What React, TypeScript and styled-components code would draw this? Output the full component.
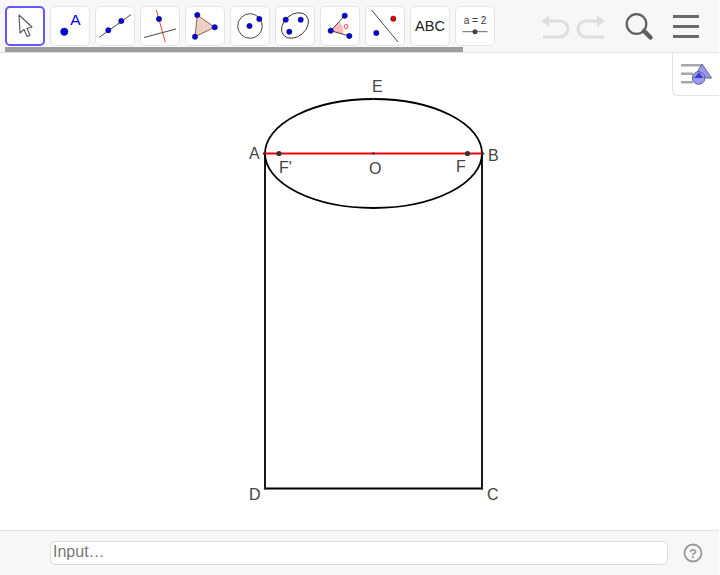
import React from 'react';
import styled, { createGlobalStyle } from 'styled-components';

const GlobalStyle = createGlobalStyle`
  html, body {
    margin: 0;
    padding: 0;
    background: #fff;
    font-family: "Liberation Sans", Arial, sans-serif;
  }
`;

const Applet = styled.div`
  width: 719px;
  height: 575px;
  display: flex;
  flex-direction: column;
  overflow: hidden;
`;

const Toolbar = styled.div`
  position: relative;
  height: 53px;
  flex: none;
  box-sizing: border-box;
  display: flex;
  align-items: flex-start;
  padding: 6px 0 0 5px;
  gap: 5px;
  background: #f7f7f7;
  border-bottom: 1px solid #e2e2e2;
`;

const ToolButton = styled.div<{ $active?: boolean }>`
  width: 40px;
  height: 40px;
  box-sizing: border-box;
  flex: none;
  background: #fff;
  border-radius: 5px;
  border: ${(p) => (p.$active ? '2px solid #6557ff' : '1px solid #e4e4e4')};
  display: flex;
  align-items: center;
  justify-content: center;
`;

const ToolIcon = styled.svg`
  width: 40px;
  height: 40px;
  flex: none;
`;

const ScrollThumb = styled.div`
  position: absolute;
  left: 5px;
  top: 47px;
  width: 458px;
  height: 5px;
  background: #9e9e9e;
`;

const RightTools = styled.svg`
  position: absolute;
  left: 535px;
  top: 6px;
  width: 175px;
  height: 40px;
`;

const Canvas = styled.div`
  position: relative;
  flex: 1;
  background: #fff;
`;

const Drawing = styled.svg`
  display: block;
  width: 719px;
  height: 477px;
`;

const PointLabel = styled.text`
  font-family: "Liberation Sans", Arial, sans-serif;
  font-size: 16px;
  fill: #444;
`;

const StyleToggle = styled.div`
  position: absolute;
  top: 0;
  right: 0;
  width: 47px;
  height: 43px;
  box-sizing: border-box;
  background: #fff;
  border-left: 1px solid #e2e2e2;
  border-bottom: 1px solid #e2e2e2;
  border-bottom-left-radius: 6px;
`;

const InputBar = styled.div`
  height: 45px;
  flex: none;
  box-sizing: border-box;
  display: flex;
  align-items: center;
  gap: 15px;
  padding: 1px 16px 1px 50px;
  background: #f7f7f7;
  border-top: 1px solid #e2e2e2;
`;

const InputBox = styled.div`
  flex: 1;
  height: 24px;
  box-sizing: border-box;
  display: flex;
  align-items: center;
  padding: 0 0 2px 2px;
  background: #fff;
  border: 1px solid #dcdcdc;
  border-radius: 5px;
  font-size: 16px;
  color: #777;
`;

const HelpButton = styled.svg`
  width: 20px;
  height: 20px;
  flex: none;
`;

const IconText = styled.text`
  font-family: "Liberation Sans", Arial, sans-serif;
`;

const Dot = ({ x, y, r = 2.7, fill = '#0000e6' }: { x: number; y: number; r?: number; fill?: string }) => (
  <circle cx={x} cy={y} r={r} fill={fill} stroke="#222" strokeWidth={0.5} />
);

const tools = [
  <>
    <path d="M14 9 L15 27 L19 23.5 L22 30.5 L25 29.3 L22 22.5 L27 21 Z" fill="#fff" stroke="#555" strokeWidth={1.1} strokeLinejoin="round" />
  </>,
  <>
    <Dot x={14.3} y={25.7} r={3.7} />
    <IconText x={20.3} y={19.3} fontSize={15.5} fill="#0000e6">A</IconText>
  </>,
  <>
    <line x1={4.3} y1={31.3} x2={36} y2={8.5} stroke="#333" strokeWidth={0.9} />
    <Dot x={13.3} y={24.3} />
    <Dot x={26.3} y={15} />
  </>,
  <>
    <line x1={16.3} y1={4} x2={25.3} y2={36} stroke="#f04040" strokeWidth={1} />
    <line x1={4} y1={31.5} x2={36} y2={23} stroke="#333" strokeWidth={0.9} />
    <Dot x={19} y={13} />
  </>,
  <>
    <polygon points="12.3,9 29.7,21.3 10,30.7" fill="#ecd0c8" stroke="#a05a50" strokeWidth={1} />
    <Dot x={12.3} y={9} />
    <Dot x={29.7} y={21.3} />
    <Dot x={10} y={30.7} />
  </>,
  <>
    <circle cx={20} cy={20} r={12.3} fill="none" stroke="#333" strokeWidth={0.9} />
    <Dot x={19.5} y={20} />
    <Dot x={29.3} y={13} />
  </>,
  <>
    <ellipse cx={20} cy={19.5} rx={15} ry={11} fill="none" stroke="#333" strokeWidth={0.9} transform="rotate(-40 20 19.5)" />
    <Dot x={10.7} y={13.7} />
    <Dot x={25.7} y={13.7} />
    <Dot x={14.3} y={25.7} />
  </>,
  <>
    <path d="M10.7 24.7 L19 15.6 A13 13 0 0 1 23 28 Z" fill="#f8bcbc" />
    <path d="M24.7 9.7 L10.7 24.7 L29.3 30" fill="none" stroke="#333" strokeWidth={0.9} />
    <Dot x={24.7} y={9.7} />
    <Dot x={10.7} y={24.7} />
    <Dot x={29.3} y={30} />
    <IconText x={23.5} y={23} fontSize={9} fill="#e03030">o</IconText>
  </>,
  <>
    <line x1={6.5} y1={4} x2={33} y2={36} stroke="#333" strokeWidth={0.9} />
    <Dot x={28.3} y={12.7} fill="#e00000" />
    <Dot x={11.3} y={27} />
  </>,
  <>
    <IconText x={20} y={25} fontSize={14.5} textAnchor="middle" fill="#222">ABC</IconText>
  </>,
  <>
    <IconText x={20} y={18} fontSize={10} textAnchor="middle" fill="#333">a = 2</IconText>
    <line x1={7.5} y1={25.7} x2={32.5} y2={25.7} stroke="#666" strokeWidth={1} />
    <circle cx={20} cy={25.7} r={2.5} fill="#444" />
  </>,
];

const App: React.FC = () => {
  return (
    <>
      <GlobalStyle />
      <Applet>
        <Toolbar>
          {tools.map((icon, i) => (
            <ToolButton key={i} $active={i === 0}>
              <ToolIcon viewBox="0 0 40 40">{icon}</ToolIcon>
            </ToolButton>
          ))}
          <ScrollThumb />
          <RightTools viewBox="535 6 175 40">
            <g fill="none" stroke="#dedede" strokeWidth={3}>
              <path d="M545 21 H560 A7.5 7.5 0 0 1 560 37 H543" />
              <path d="M600 21 H586 A7.5 7.5 0 0 0 586 37 H604" />
            </g>
            <path d="M549 15.5 L541.5 21 L549 27 Z" fill="#dedede" />
            <path d="M597 15.5 L605 21 L597 27 Z" fill="#dedede" />
            <circle cx={636.5} cy={24} r={9.8} fill="none" stroke="#5f5f5f" strokeWidth={2.2} />
            <line x1={644} y1={31} x2={650.5} y2={37.5} stroke="#5f5f5f" strokeWidth={4.5} strokeLinecap="round" />
            <g fill="#6a6a6a">
              <rect x={673} y={15} width={26} height={3} />
              <rect x={673} y={25} width={26} height={3} />
              <rect x={673} y={35} width={26} height={3} />
            </g>
          </RightTools>
        </Toolbar>
        <Canvas>
          <Drawing viewBox="0 53 719 477">
            <g fill="none" stroke="#000" strokeWidth={1.8}>
              <path d="M265 153.5 V488.5 H482 V153.5" />
              <ellipse cx={373.5} cy={153.5} rx={108.5} ry={54.5} />
            </g>
            <line x1={265} y1={153.5} x2={482} y2={153.5} stroke="#f00000" strokeWidth={1.8} />
            <g fill="#333">
              <circle cx={279} cy={153.5} r={2.6} />
              <circle cx={467.5} cy={153.5} r={2.6} />
              <circle cx={373.5} cy={153.5} r={1.2} />
              <circle cx={373.5} cy={99} r={1.2} />
              <circle cx={264} cy={153.5} r={1.2} />
              <circle cx={483} cy={153.5} r={1.2} />
              <circle cx={265} cy={488.5} r={1.2} />
              <circle cx={482} cy={488.5} r={1.2} />
            </g>
            <PointLabel x={372} y={92}>E</PointLabel>
            <PointLabel x={249} y={159}>A</PointLabel>
            <PointLabel x={488} y={161}>B</PointLabel>
            <PointLabel x={279} y={173}>F'</PointLabel>
            <PointLabel x={369} y={174}>O</PointLabel>
            <PointLabel x={456} y={172}>F</PointLabel>
            <PointLabel x={249} y={500}>D</PointLabel>
            <PointLabel x={487} y={500}>C</PointLabel>
          </Drawing>
          <StyleToggle>
            <svg width="46" height="42" viewBox="0 0 46 42">
              <g fill="#a8a8a8">
                <rect x={8} y={11} width={20} height={2.5} />
                <rect x={8} y={19.5} width={12} height={2.5} />
                <rect x={8} y={28} width={12} height={2.5} />
              </g>
              <polygon points="29,11 38.5,25 20.5,25" fill="#9a9af5" stroke="#55557a" strokeWidth={0.9} />
              <circle cx={25.7} cy={25} r={6.3} fill="#9a9af5" stroke="#55557a" strokeWidth={0.9} />
              <polygon points="26,19.5 30.5,25 21,25" fill="#3a3ad0" />
            </svg>
          </StyleToggle>
        </Canvas>
        <InputBar>
          <InputBox>Input…</InputBox>
          <HelpButton viewBox="0 0 20 20">
            <circle cx={10} cy={10} r={8.5} fill="none" stroke="#9a9a9a" strokeWidth={1.8} />
            <IconText x={10} y={14.5} fontSize={13} fontWeight="bold" textAnchor="middle" fill="#9a9a9a">?</IconText>
          </HelpButton>
        </InputBar>
      </Applet>
    </>
  );
};

export default App;
